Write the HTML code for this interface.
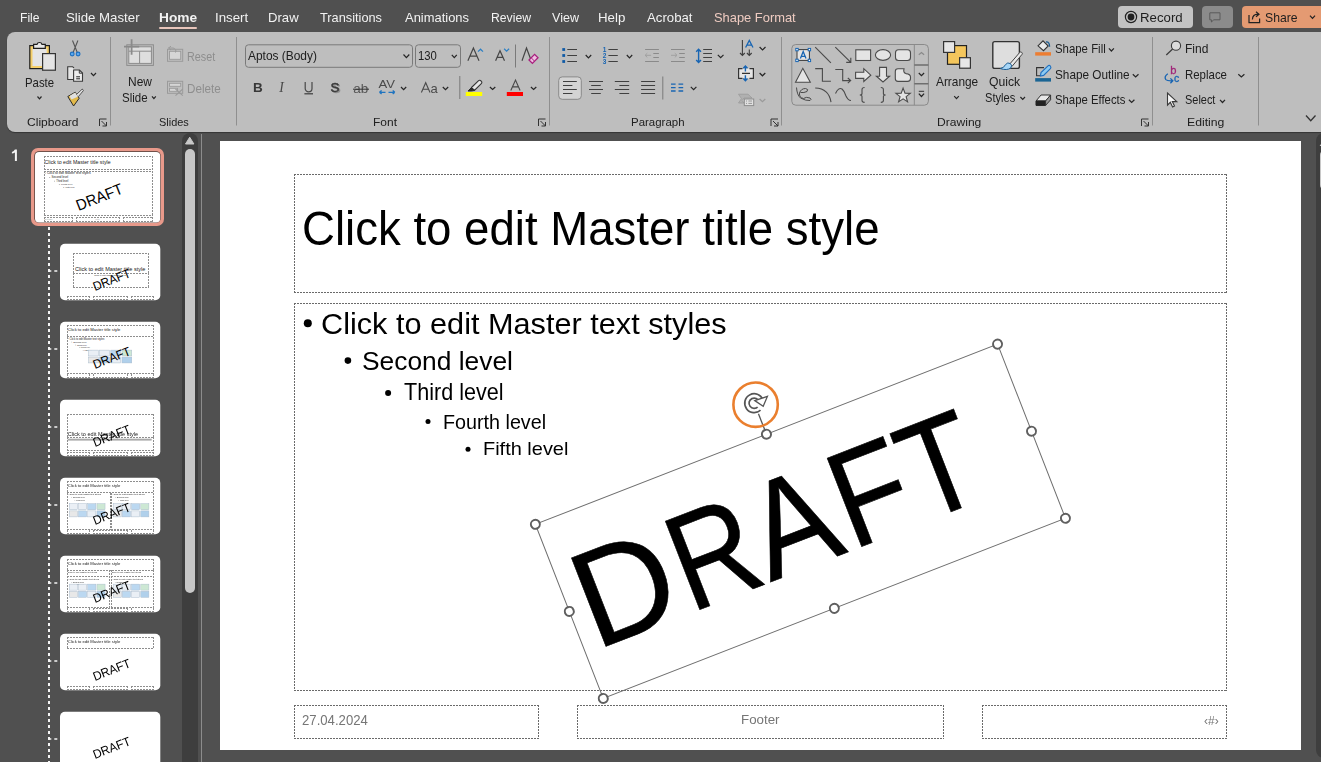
<!DOCTYPE html>
<html><head><meta charset="utf-8">
<style>
html,body{margin:0;padding:0;}
body{width:1321px;height:762px;overflow:hidden;background:#505050;position:relative;font-family:"Liberation Sans",sans-serif;}
.t{position:absolute;white-space:nowrap;line-height:1em;transform-origin:0 0;}
.abs{position:absolute;}
svg{position:absolute;left:0;top:0;overflow:visible;}
</style></head><body>
<!-- tab underline -->
<div class="abs" style="left:159px;top:27px;width:38px;height:2px;background:#e8c5bb;border-radius:1px"></div>
<!-- top-right buttons -->
<div class="abs" style="left:1117.5px;top:5.5px;width:75px;height:22.5px;background:#c3c3c3;border-radius:4px"></div>
<div class="abs" style="left:1201.5px;top:5.5px;width:31px;height:22.5px;background:#8b8b8b;border-radius:4px"></div>
<div class="abs" style="left:1241.5px;top:5.5px;width:85px;height:22.5px;background:#e49a72;border-radius:4px"></div>
<!-- ribbon -->
<div class="abs" style="left:7px;top:32px;width:1330px;height:99.5px;background:#bebebe;border-radius:8px;box-shadow:0 1px 1px rgba(0,0,0,0.35)"></div>
<!-- left panel scrollbar -->
<div class="abs" style="left:181.5px;top:132.5px;width:16px;height:640px;background:#3e3e3e;border-radius:8px 8px 0 0"></div>
<div class="abs" style="left:185px;top:149px;width:9.5px;height:444px;background:#c8c8c8;border-radius:5px"></div>
<div class="abs" style="left:201px;top:134px;width:1px;height:640px;background:#8c8c8c"></div>
<svg width="1321" height="762"><path d="M185.5 144 L189.7 137.2 L193.9 144 Z" fill="#c8c8c8" stroke="#c8c8c8" stroke-width="1" stroke-linejoin="round"/></svg>
<!-- right scrollbar -->
<div class="abs" style="left:1316px;top:132.5px;width:16px;height:625px;background:#3e3e3e;border-radius:8px"></div>
<div class="abs" style="left:1319.6px;top:150.7px;width:8px;height:38.7px;background:#c8c8c8;border-radius:4px"></div>
<svg width="1321" height="762"><path d="M1319.6 146 L1323.5 140.5 L1327 146 Z" fill="#c8c8c8"/></svg>
<!-- slide -->
<div class="abs" style="left:220px;top:141px;width:1080.5px;height:609px;background:#fff"></div>
<svg width="1321" height="762">
<line x1="49" y1="227" x2="49" y2="762" stroke="#f4f4f4" stroke-width="2" stroke-dasharray="3 3"/>
<line x1="48.3" y1="271" x2="57.3" y2="271" stroke="#f4f4f4" stroke-width="1.6" stroke-dasharray="3 3"/>
<rect x="60" y="243.7" width="100.3" height="56.5" rx="5" fill="#fff"/><clipPath id="c243"><rect x="60" y="243.7" width="100.3" height="56.5" rx="5"/></clipPath><g clip-path="url(#c243)"><g transform="translate(60 243.7) scale(0.09287)" opacity="0.9"><text x="540" y="295" text-anchor="middle" font-family="Liberation Sans" font-size="60" fill="#000">Click to edit Master title style</text><text x="540" y="345" text-anchor="middle" font-family="Liberation Sans" font-size="24" fill="#000">Click to edit Master subtitle style</text></g><path d="M73 253.5 H149 M73 273.5 H149 M73.5 253 V274 M148.5 253 V274" fill="none" stroke="#8e8e8e" stroke-width="1" stroke-dasharray="2 1"/><path d="M73 287.5 H149 M73.5 273 V288 M148.5 273 V288" fill="none" stroke="#8e8e8e" stroke-width="1" stroke-dasharray="2 1"/><path d="M67 296.5 H90 M67 299.5 H90 M67.5 296 V300 M89.5 296 V300" fill="none" stroke="#8e8e8e" stroke-width="1" stroke-dasharray="2 1"/><path d="M93 296.5 H128 M93 299.5 H128 M93.5 296 V300 M127.5 296 V300" fill="none" stroke="#8e8e8e" stroke-width="1" stroke-dasharray="2 1"/><path d="M131 296.5 H154 M131 299.5 H154 M131.5 296 V300 M153.5 296 V300" fill="none" stroke="#8e8e8e" stroke-width="1" stroke-dasharray="2 1"/><g transform="translate(60 243.7) scale(0.09287)"><g transform="translate(315.5 382) rotate(-21.3)"><text x="11.07" y="139.5" transform="scale(0.947 1)" font-family="Liberation Sans" font-size="134" fill="#000">DRAFT</text></g></g></g>
<line x1="48.3" y1="349" x2="57.3" y2="349" stroke="#f4f4f4" stroke-width="1.6" stroke-dasharray="3 3"/>
<rect x="60" y="321.7" width="100.3" height="56.5" rx="5" fill="#fff"/><clipPath id="c321"><rect x="60" y="321.7" width="100.3" height="56.5" rx="5"/></clipPath><g clip-path="url(#c321)"><g transform="translate(60 321.7) scale(0.09287)" opacity="0.9"><text x="83" y="104" font-family="Liberation Sans" font-size="45" fill="#000">Click to edit Master title style</text><circle cx="87.8" cy="182.0" r="3.0" fill="#000"/><text x="103.0" y="192.5" font-family="Liberation Sans" font-size="28.5" fill="#000">Click to edit Master text styles</text><circle cx="127.8" cy="219.0" r="3.0" fill="#000"/><text x="143.0" y="228.3" font-family="Liberation Sans" font-size="25.2" fill="#000">Second level</text><circle cx="168.8" cy="251.2" r="3.0" fill="#000"/><text x="184.0" y="259.5" font-family="Liberation Sans" font-size="22.3" fill="#000">Third level</text><circle cx="208.8" cy="280.9" r="3.0" fill="#000"/><text x="224.0" y="287.9" font-family="Liberation Sans" font-size="19.0" fill="#000">Fourth level</text><circle cx="248.8" cy="307.8" r="3.0" fill="#000"/><text x="264.0" y="314.5" font-family="Liberation Sans" font-size="18.2" fill="#000">Fifth level</text><rect x="307.2" y="306.0" width="105.6" height="63.0" fill="#e8eef4" stroke="#9fb3c6" stroke-width="5"/><rect x="427.2" y="306.0" width="105.6" height="63.0" fill="#e8eef4" stroke="#9fb3c6" stroke-width="5"/><rect x="547.2" y="306.0" width="105.6" height="63.0" fill="#b4d4f0" stroke="#9fb3c6" stroke-width="5"/><rect x="667.2" y="306.0" width="105.6" height="63.0" fill="#c8e6d0" stroke="#9fb3c6" stroke-width="5"/><rect x="307.2" y="381.0" width="105.6" height="63.0" fill="#e6e6e6" stroke="#9fb3c6" stroke-width="5"/><rect x="427.2" y="381.0" width="105.6" height="63.0" fill="#b4d4f0" stroke="#9fb3c6" stroke-width="5"/><rect x="547.2" y="381.0" width="105.6" height="63.0" fill="#e8eef4" stroke="#9fb3c6" stroke-width="5"/><rect x="667.2" y="381.0" width="105.6" height="63.0" fill="#a8cbe9" stroke="#9fb3c6" stroke-width="5"/></g><path d="M67 325.5 H154 M67 336.5 H154 M67.5 325 V337 M153.5 325 V337" fill="none" stroke="#8e8e8e" stroke-width="1" stroke-dasharray="2 1"/><path d="M67 373.5 H154 M67.5 337 V374 M153.5 337 V374" fill="none" stroke="#8e8e8e" stroke-width="1" stroke-dasharray="2 1"/><path d="M67 377.5 H90 M67.5 374 V378 M89.5 374 V378" fill="none" stroke="#8e8e8e" stroke-width="1" stroke-dasharray="2 1"/><path d="M93 377.5 H128 M93.5 374 V378 M127.5 374 V378" fill="none" stroke="#8e8e8e" stroke-width="1" stroke-dasharray="2 1"/><path d="M131 377.5 H154 M131.5 374 V378 M153.5 374 V378" fill="none" stroke="#8e8e8e" stroke-width="1" stroke-dasharray="2 1"/><g transform="translate(60 321.7) scale(0.09287)"><g transform="translate(315.5 382) rotate(-21.3)"><text x="11.07" y="139.5" transform="scale(0.947 1)" font-family="Liberation Sans" font-size="134" fill="#000">DRAFT</text></g></g></g>
<line x1="48.3" y1="427" x2="57.3" y2="427" stroke="#f4f4f4" stroke-width="1.6" stroke-dasharray="3 3"/>
<rect x="60" y="399.7" width="100.3" height="56.5" rx="5" fill="#fff"/><clipPath id="c399"><rect x="60" y="399.7" width="100.3" height="56.5" rx="5"/></clipPath><g clip-path="url(#c399)"><g transform="translate(60 399.7) scale(0.09287)" opacity="0.9"><text x="83" y="395" font-family="Liberation Sans" font-size="60" fill="#000">Click to edit Master title style</text><rect x="84" y="420" width="900" height="16" fill="#9a9a9a" opacity="0.5"/><rect x="84" y="420" width="900" height="16" fill="#9a9a9a" opacity="0.5"/><rect x="84" y="420" width="900" height="16" fill="#9a9a9a" opacity="0.5"/><rect x="84" y="420" width="900" height="16" fill="#9a9a9a" opacity="0.5"/><rect x="84" y="420" width="900" height="16" fill="#9a9a9a" opacity="0.5"/><rect x="84" y="420" width="900" height="16" fill="#9a9a9a" opacity="0.5"/></g><path d="M67 414.5 H154 M67 437.5 H154 M67.5 414 V438 M153.5 414 V438" fill="none" stroke="#8e8e8e" stroke-width="1" stroke-dasharray="2 1"/><path d="M67 450.5 H154 M67.5 437 V451 M153.5 437 V451" fill="none" stroke="#8e8e8e" stroke-width="1" stroke-dasharray="2 1"/><path d="M67 452.5 H90 M67 455.5 H90 M67.5 452 V456 M89.5 452 V456" fill="none" stroke="#8e8e8e" stroke-width="1" stroke-dasharray="2 1"/><path d="M93 452.5 H128 M93 455.5 H128 M93.5 452 V456 M127.5 452 V456" fill="none" stroke="#8e8e8e" stroke-width="1" stroke-dasharray="2 1"/><path d="M131 452.5 H154 M131 455.5 H154 M131.5 452 V456 M153.5 452 V456" fill="none" stroke="#8e8e8e" stroke-width="1" stroke-dasharray="2 1"/><g transform="translate(60 399.7) scale(0.09287)"><g transform="translate(315.5 382) rotate(-21.3)"><text x="11.07" y="139.5" transform="scale(0.947 1)" font-family="Liberation Sans" font-size="134" fill="#000">DRAFT</text></g></g></g>
<line x1="48.3" y1="505" x2="57.3" y2="505" stroke="#f4f4f4" stroke-width="1.6" stroke-dasharray="3 3"/>
<rect x="60" y="477.7" width="100.3" height="56.5" rx="5" fill="#fff"/><clipPath id="c477"><rect x="60" y="477.7" width="100.3" height="56.5" rx="5"/></clipPath><g clip-path="url(#c477)"><g transform="translate(60 477.7) scale(0.09287)" opacity="0.9"><text x="83" y="104" font-family="Liberation Sans" font-size="45" fill="#000">Click to edit Master title style</text><circle cx="87.8" cy="179.9" r="2.7" fill="#000"/><text x="103.0" y="189.4" font-family="Liberation Sans" font-size="25.7" fill="#000">Click to edit Master text styles</text><circle cx="123.8" cy="213.2" r="2.7" fill="#000"/><text x="139.0" y="221.6" font-family="Liberation Sans" font-size="22.7" fill="#000">Second level</text><circle cx="160.7" cy="242.3" r="2.7" fill="#000"/><text x="175.9" y="249.7" font-family="Liberation Sans" font-size="20.1" fill="#000">Third level</text><circle cx="559.8" cy="179.9" r="2.7" fill="#000"/><text x="575.0" y="189.4" font-family="Liberation Sans" font-size="25.7" fill="#000">Click to edit Master text styles</text><circle cx="595.8" cy="213.2" r="2.7" fill="#000"/><text x="611.0" y="221.6" font-family="Liberation Sans" font-size="22.7" fill="#000">Second level</text><circle cx="632.7" cy="242.3" r="2.7" fill="#000"/><text x="647.9" y="249.7" font-family="Liberation Sans" font-size="20.1" fill="#000">Third level</text><rect x="100.9" y="280.2" width="87.1" height="64.7" fill="#e8eef4" stroke="#9fb3c6" stroke-width="5"/><rect x="199.9" y="280.2" width="87.1" height="64.7" fill="#e8eef4" stroke="#9fb3c6" stroke-width="5"/><rect x="298.9" y="280.2" width="87.1" height="64.7" fill="#b4d4f0" stroke="#9fb3c6" stroke-width="5"/><rect x="397.9" y="280.2" width="87.1" height="64.7" fill="#c8e6d0" stroke="#9fb3c6" stroke-width="5"/><rect x="100.9" y="357.2" width="87.1" height="64.7" fill="#e6e6e6" stroke="#9fb3c6" stroke-width="5"/><rect x="199.9" y="357.2" width="87.1" height="64.7" fill="#b4d4f0" stroke="#9fb3c6" stroke-width="5"/><rect x="298.9" y="357.2" width="87.1" height="64.7" fill="#e8eef4" stroke="#9fb3c6" stroke-width="5"/><rect x="397.9" y="357.2" width="87.1" height="64.7" fill="#a8cbe9" stroke="#9fb3c6" stroke-width="5"/><rect x="572.9" y="280.2" width="87.1" height="64.7" fill="#e8eef4" stroke="#9fb3c6" stroke-width="5"/><rect x="671.9" y="280.2" width="87.1" height="64.7" fill="#e8eef4" stroke="#9fb3c6" stroke-width="5"/><rect x="770.9" y="280.2" width="87.1" height="64.7" fill="#b4d4f0" stroke="#9fb3c6" stroke-width="5"/><rect x="869.9" y="280.2" width="87.1" height="64.7" fill="#c8e6d0" stroke="#9fb3c6" stroke-width="5"/><rect x="572.9" y="357.2" width="87.1" height="64.7" fill="#e6e6e6" stroke="#9fb3c6" stroke-width="5"/><rect x="671.9" y="357.2" width="87.1" height="64.7" fill="#b4d4f0" stroke="#9fb3c6" stroke-width="5"/><rect x="770.9" y="357.2" width="87.1" height="64.7" fill="#e8eef4" stroke="#9fb3c6" stroke-width="5"/><rect x="869.9" y="357.2" width="87.1" height="64.7" fill="#a8cbe9" stroke="#9fb3c6" stroke-width="5"/></g><path d="M67 481.5 H154 M67 492.5 H154 M67.5 481 V493 M153.5 481 V493" fill="none" stroke="#8e8e8e" stroke-width="1" stroke-dasharray="2 1"/><path d="M67 529.5 H111 M67.5 493 V530 M110.5 493 V530" fill="none" stroke="#8e8e8e" stroke-width="1" stroke-dasharray="2 1"/><path d="M111 529.5 H154 M111.5 493 V530 M153.5 493 V530" fill="none" stroke="#8e8e8e" stroke-width="1" stroke-dasharray="2 1"/><path d="M67 533.5 H90 M67.5 530 V534 M89.5 530 V534" fill="none" stroke="#8e8e8e" stroke-width="1" stroke-dasharray="2 1"/><path d="M93 530.5 H128 M93 533.5 H128 M93.5 530 V534 M127.5 530 V534" fill="none" stroke="#8e8e8e" stroke-width="1" stroke-dasharray="2 1"/><path d="M131 533.5 H154 M131.5 530 V534 M153.5 530 V534" fill="none" stroke="#8e8e8e" stroke-width="1" stroke-dasharray="2 1"/><g transform="translate(60 477.7) scale(0.09287)"><g transform="translate(315.5 382) rotate(-21.3)"><text x="11.07" y="139.5" transform="scale(0.947 1)" font-family="Liberation Sans" font-size="134" fill="#000">DRAFT</text></g></g></g>
<line x1="48.3" y1="583" x2="57.3" y2="583" stroke="#f4f4f4" stroke-width="1.6" stroke-dasharray="3 3"/>
<rect x="60" y="555.7" width="100.3" height="56.5" rx="5" fill="#fff"/><clipPath id="c555"><rect x="60" y="555.7" width="100.3" height="56.5" rx="5"/></clipPath><g clip-path="url(#c555)"><g transform="translate(60 555.7) scale(0.09287)" opacity="0.9"><text x="83" y="104" font-family="Liberation Sans" font-size="45" fill="#000">Click to edit Master title style</text><text x="84" y="190" font-family="Liberation Sans" font-size="24" fill="#000">Click to edit Master text styles</text><text x="557" y="190" font-family="Liberation Sans" font-size="24" fill="#000">Click to edit Master text styles</text><circle cx="87.8" cy="253.4" r="2.5" fill="#000"/><text x="103.0" y="262.4" font-family="Liberation Sans" font-size="24.2" fill="#000">Click to edit Master text styles</text><circle cx="121.8" cy="284.9" r="2.5" fill="#000"/><text x="137.0" y="292.8" font-family="Liberation Sans" font-size="21.4" fill="#000">Second level</text><circle cx="156.6" cy="312.3" r="2.5" fill="#000"/><text x="171.8" y="319.3" font-family="Liberation Sans" font-size="19.0" fill="#000">Third level</text><circle cx="559.8" cy="253.4" r="2.5" fill="#000"/><text x="575.0" y="262.4" font-family="Liberation Sans" font-size="24.2" fill="#000">Click to edit Master text styles</text><circle cx="593.8" cy="284.9" r="2.5" fill="#000"/><text x="609.0" y="292.8" font-family="Liberation Sans" font-size="21.4" fill="#000">Second level</text><circle cx="628.6" cy="312.3" r="2.5" fill="#000"/><text x="643.9" y="319.3" font-family="Liberation Sans" font-size="19.0" fill="#000">Third level</text><rect x="100.9" y="306.2" width="87.1" height="64.7" fill="#e8eef4" stroke="#9fb3c6" stroke-width="5"/><rect x="199.9" y="306.2" width="87.1" height="64.7" fill="#e8eef4" stroke="#9fb3c6" stroke-width="5"/><rect x="298.9" y="306.2" width="87.1" height="64.7" fill="#b4d4f0" stroke="#9fb3c6" stroke-width="5"/><rect x="397.9" y="306.2" width="87.1" height="64.7" fill="#c8e6d0" stroke="#9fb3c6" stroke-width="5"/><rect x="100.9" y="383.2" width="87.1" height="64.7" fill="#e6e6e6" stroke="#9fb3c6" stroke-width="5"/><rect x="199.9" y="383.2" width="87.1" height="64.7" fill="#b4d4f0" stroke="#9fb3c6" stroke-width="5"/><rect x="298.9" y="383.2" width="87.1" height="64.7" fill="#e8eef4" stroke="#9fb3c6" stroke-width="5"/><rect x="397.9" y="383.2" width="87.1" height="64.7" fill="#a8cbe9" stroke="#9fb3c6" stroke-width="5"/><rect x="572.9" y="306.2" width="87.1" height="64.7" fill="#e8eef4" stroke="#9fb3c6" stroke-width="5"/><rect x="671.9" y="306.2" width="87.1" height="64.7" fill="#e8eef4" stroke="#9fb3c6" stroke-width="5"/><rect x="770.9" y="306.2" width="87.1" height="64.7" fill="#b4d4f0" stroke="#9fb3c6" stroke-width="5"/><rect x="869.9" y="306.2" width="87.1" height="64.7" fill="#c8e6d0" stroke="#9fb3c6" stroke-width="5"/><rect x="572.9" y="383.2" width="87.1" height="64.7" fill="#e6e6e6" stroke="#9fb3c6" stroke-width="5"/><rect x="671.9" y="383.2" width="87.1" height="64.7" fill="#b4d4f0" stroke="#9fb3c6" stroke-width="5"/><rect x="770.9" y="383.2" width="87.1" height="64.7" fill="#e8eef4" stroke="#9fb3c6" stroke-width="5"/><rect x="869.9" y="383.2" width="87.1" height="64.7" fill="#a8cbe9" stroke="#9fb3c6" stroke-width="5"/></g><path d="M67 559.5 H154 M67 570.5 H154 M67.5 559 V571 M153.5 559 V571" fill="none" stroke="#8e8e8e" stroke-width="1" stroke-dasharray="2 1"/><path d="M67 576.5 H110 M67.5 570 V577 M109.5 570 V577" fill="none" stroke="#8e8e8e" stroke-width="1" stroke-dasharray="2 1"/><path d="M67 607.5 H110 M67.5 576 V608 M109.5 576 V608" fill="none" stroke="#8e8e8e" stroke-width="1" stroke-dasharray="2 1"/><path d="M111 576.5 H154 M111.5 570 V577 M153.5 570 V577" fill="none" stroke="#8e8e8e" stroke-width="1" stroke-dasharray="2 1"/><path d="M111 607.5 H154 M111.5 576 V608 M153.5 576 V608" fill="none" stroke="#8e8e8e" stroke-width="1" stroke-dasharray="2 1"/><path d="M67 611.5 H90 M67.5 608 V612 M89.5 608 V612" fill="none" stroke="#8e8e8e" stroke-width="1" stroke-dasharray="2 1"/><path d="M93 608.5 H128 M93 611.5 H128 M93.5 608 V612 M127.5 608 V612" fill="none" stroke="#8e8e8e" stroke-width="1" stroke-dasharray="2 1"/><path d="M131 611.5 H154 M131.5 608 V612 M153.5 608 V612" fill="none" stroke="#8e8e8e" stroke-width="1" stroke-dasharray="2 1"/><g transform="translate(60 555.7) scale(0.09287)"><g transform="translate(315.5 382) rotate(-21.3)"><text x="11.07" y="139.5" transform="scale(0.947 1)" font-family="Liberation Sans" font-size="134" fill="#000">DRAFT</text></g></g></g>
<line x1="48.3" y1="661" x2="57.3" y2="661" stroke="#f4f4f4" stroke-width="1.6" stroke-dasharray="3 3"/>
<rect x="60" y="633.7" width="100.3" height="56.5" rx="5" fill="#fff"/><clipPath id="c633"><rect x="60" y="633.7" width="100.3" height="56.5" rx="5"/></clipPath><g clip-path="url(#c633)"><g transform="translate(60 633.7) scale(0.09287)" opacity="0.9"><text x="83" y="104" font-family="Liberation Sans" font-size="45" fill="#000">Click to edit Master title style</text></g><path d="M67 637.5 H154 M67 648.5 H154 M67.5 637 V649 M153.5 637 V649" fill="none" stroke="#8e8e8e" stroke-width="1" stroke-dasharray="2 1"/><path d="M67 686.5 H90 M67 689.5 H90 M67.5 686 V690 M89.5 686 V690" fill="none" stroke="#8e8e8e" stroke-width="1" stroke-dasharray="2 1"/><path d="M93 686.5 H128 M93 689.5 H128 M93.5 686 V690 M127.5 686 V690" fill="none" stroke="#8e8e8e" stroke-width="1" stroke-dasharray="2 1"/><path d="M131 686.5 H154 M131 689.5 H154 M131.5 686 V690 M153.5 686 V690" fill="none" stroke="#8e8e8e" stroke-width="1" stroke-dasharray="2 1"/><g transform="translate(60 633.7) scale(0.09287)"><g transform="translate(315.5 382) rotate(-21.3)"><text x="11.07" y="139.5" transform="scale(0.947 1)" font-family="Liberation Sans" font-size="134" fill="#000">DRAFT</text></g></g></g>
<line x1="48.3" y1="739" x2="57.3" y2="739" stroke="#f4f4f4" stroke-width="1.6" stroke-dasharray="3 3"/>
<rect x="60" y="711.7" width="100.3" height="56.5" rx="5" fill="#fff"/><clipPath id="c711"><rect x="60" y="711.7" width="100.3" height="56.5" rx="5"/></clipPath><g clip-path="url(#c711)"><g transform="translate(60 711.7) scale(0.09287)" opacity="0.9"></g><path d="M67 764.5 H90 M67 767.5 H90 M67.5 764 V768 M89.5 764 V768" fill="none" stroke="#8e8e8e" stroke-width="1" stroke-dasharray="2 1"/><path d="M93 764.5 H128 M93 767.5 H128 M93.5 764 V768 M127.5 764 V768" fill="none" stroke="#8e8e8e" stroke-width="1" stroke-dasharray="2 1"/><path d="M131 764.5 H154 M131 767.5 H154 M131.5 764 V768 M153.5 764 V768" fill="none" stroke="#8e8e8e" stroke-width="1" stroke-dasharray="2 1"/><g transform="translate(60 711.7) scale(0.09287)"><g transform="translate(315.5 382) rotate(-21.3)"><text x="11.07" y="139.5" transform="scale(0.947 1)" font-family="Liberation Sans" font-size="134" fill="#000">DRAFT</text></g></g></g>
<rect x="31" y="148" width="133" height="78" rx="7" fill="#e8998a"/>
<rect x="34.3" y="151.3" width="126.4" height="71.4" rx="4.5" fill="#4a3a36"/>
<rect x="35" y="152" width="125.2" height="70.4" rx="4" fill="#fff"/><clipPath id="c152"><rect x="35" y="152" width="125.2" height="70.4" rx="4"/></clipPath><g clip-path="url(#c152)"><g transform="translate(35 152) scale(0.11593)" opacity="0.9"><text x="83" y="104" font-family="Liberation Sans" font-size="45" fill="#000">Click to edit Master title style</text><circle cx="87.8" cy="182.0" r="3.0" fill="#000"/><text x="103.0" y="192.5" font-family="Liberation Sans" font-size="28.5" fill="#000">Click to edit Master text styles</text><circle cx="127.8" cy="219.0" r="3.0" fill="#000"/><text x="143.0" y="228.3" font-family="Liberation Sans" font-size="25.2" fill="#000">Second level</text><circle cx="168.8" cy="251.2" r="3.0" fill="#000"/><text x="184.0" y="259.5" font-family="Liberation Sans" font-size="22.3" fill="#000">Third level</text><circle cx="208.8" cy="280.9" r="3.0" fill="#000"/><text x="224.0" y="287.9" font-family="Liberation Sans" font-size="19.0" fill="#000">Fourth level</text><circle cx="248.8" cy="307.8" r="3.0" fill="#000"/><text x="264.0" y="314.5" font-family="Liberation Sans" font-size="18.2" fill="#000">Fifth level</text><text x="82" y="584" font-family="Liberation Sans" font-size="13.4" fill="#777">27.04.2024</text><text x="521" y="583" font-family="Liberation Sans" font-size="12" fill="#777">Footer</text></g><path d="M44 156.5 H153 M44 169.5 H153 M44.5 156 V170 M152.5 156 V170" fill="none" stroke="#8e8e8e" stroke-width="1" stroke-dasharray="2 1"/><path d="M44 171.5 H153 M44 215.5 H153 M44.5 171 V216 M152.5 171 V216" fill="none" stroke="#8e8e8e" stroke-width="1" stroke-dasharray="2 1"/><path d="M44 217.5 H73 M44 221.5 H73 M44.5 217 V222 M72.5 217 V222" fill="none" stroke="#8e8e8e" stroke-width="1" stroke-dasharray="2 1"/><path d="M76 217.5 H120 M76 221.5 H120 M76.5 217 V222 M119.5 217 V222" fill="none" stroke="#8e8e8e" stroke-width="1" stroke-dasharray="2 1"/><path d="M123 217.5 H153 M123 221.5 H153 M123.5 217 V222 M152.5 217 V222" fill="none" stroke="#8e8e8e" stroke-width="1" stroke-dasharray="2 1"/><g transform="translate(35 152) scale(0.11593)"><g transform="translate(315.5 382) rotate(-21.3)"><text x="11.07" y="139.5" transform="scale(0.947 1)" font-family="Liberation Sans" font-size="134" fill="#000">DRAFT</text></g></g></g>
<path d="M14.9 149.6 H16.9 V160.9 H14.9 V152.4 Q13.6 153.4 11.9 153.6 V151.9 Q14 151.3 14.9 149.6 Z" fill="#f4f4f4"/>
</svg>
<svg width="1321" height="762" style="pointer-events:none">
<path d="M294 174.5 H1227 M294 292.5 H1227 M294.5 174 V293 M1226.5 174 V293" stroke="#6a6a6a" stroke-width="1" fill="none" stroke-dasharray="2 1"/>
<path d="M294 303.5 H1227 M294 690.5 H1227 M294.5 303 V691 M1226.5 303 V691" stroke="#6a6a6a" stroke-width="1" fill="none" stroke-dasharray="2 1"/>
<path d="M294 705.5 H539 M294 738.5 H539 M294.5 705 V739 M538.5 705 V739" stroke="#6a6a6a" stroke-width="1" fill="none" stroke-dasharray="2 1"/>
<path d="M577 705.5 H944 M577 738.5 H944 M577.5 705 V739 M943.5 705 V739" stroke="#6a6a6a" stroke-width="1" fill="none" stroke-dasharray="2 1"/>
<path d="M982 705.5 H1227 M982 738.5 H1227 M982.5 705 V739 M1226.5 705 V739" stroke="#6a6a6a" stroke-width="1" fill="none" stroke-dasharray="2 1"/>
<circle cx="307.8" cy="323.3" r="4.0" fill="#000"/>
<circle cx="347.9" cy="360.6" r="3.3" fill="#000"/>
<circle cx="388.1" cy="393" r="3.0" fill="#000"/>
<circle cx="428" cy="421.6" r="2.5" fill="#000"/>
<circle cx="468" cy="449.2" r="2.5" fill="#000"/>
<g transform="translate(535.5 523.5) rotate(-21.3)">
<text transform="translate(9.78 140) scale(0.991 1)" font-family="Liberation Sans" font-size="138" fill="#000" stroke="#000" stroke-width="0.6">D</text>
<text transform="translate(112.16 140) scale(0.852 1)" font-family="Liberation Sans" font-size="138" fill="#000" stroke="#000" stroke-width="0.6">R</text>
<text transform="translate(197.35 140) scale(0.915 1)" font-family="Liberation Sans" font-size="138" fill="#000" stroke="#000" stroke-width="0.6">A</text>
<text transform="translate(285.45 140) scale(0.888 1)" font-family="Liberation Sans" font-size="138" fill="#000" stroke="#000" stroke-width="0.6">F</text>
<text transform="translate(359.93 140) scale(0.878 1)" font-family="Liberation Sans" font-size="138" fill="#000" stroke="#000" stroke-width="0.6">T</text>
</g>
<g transform="translate(535.35 524.34) rotate(-21.3)">
<rect x="0" y="0" width="496.1" height="186.9" fill="none" stroke="#6e6e6e" stroke-width="1"/>
<line x1="248.05" y1="-5" x2="248.05" y2="-22" stroke="#555" stroke-width="1.3"/>
<circle cx="0" cy="0" r="4.5" fill="#fff" stroke="#5f5f5f" stroke-width="2"/>
<circle cx="248.05" cy="0" r="4.5" fill="#fff" stroke="#5f5f5f" stroke-width="2"/>
<circle cx="496.1" cy="0" r="4.5" fill="#fff" stroke="#5f5f5f" stroke-width="2"/>
<circle cx="0" cy="93.45" r="4.5" fill="#fff" stroke="#5f5f5f" stroke-width="2"/>
<circle cx="496.1" cy="93.45" r="4.5" fill="#fff" stroke="#5f5f5f" stroke-width="2"/>
<circle cx="0" cy="186.9" r="4.5" fill="#fff" stroke="#5f5f5f" stroke-width="2"/>
<circle cx="248.05" cy="186.9" r="4.5" fill="#fff" stroke="#5f5f5f" stroke-width="2"/>
<circle cx="496.1" cy="186.9" r="4.5" fill="#fff" stroke="#5f5f5f" stroke-width="2"/>
</g>
<circle cx="755.6" cy="404.7" r="22.2" fill="none" stroke="#ea7f2e" stroke-width="2.6"/>
<path d="M760.97 400.47 A7.3 7.3 0 1 0 759.08 408.62" fill="none" stroke="#555" stroke-width="6"/>
<path d="M761.22 401.19 A7.3 7.3 0 1 0 759.62 408.08" fill="none" stroke="#fff" stroke-width="2.6"/>
<path d="M754.8 400.6 L767.4 396.4 L763.2 406.2 Z" fill="#fff" stroke="#555" stroke-width="1.3" stroke-linejoin="miter"/>
<text x="1204" y="725" font-family="Liberation Sans" font-size="12" fill="#777">‹#›</text>
</svg><svg width="1321" height="762">
<line x1="110.5" y1="37" x2="110.5" y2="125.5" stroke="#8f8f8f" stroke-width="1"/>
<line x1="236.5" y1="37" x2="236.5" y2="125.5" stroke="#8f8f8f" stroke-width="1"/>
<line x1="549.5" y1="37" x2="549.5" y2="125.5" stroke="#8f8f8f" stroke-width="1"/>
<line x1="781.5" y1="37" x2="781.5" y2="125.5" stroke="#8f8f8f" stroke-width="1"/>
<line x1="1152.5" y1="37" x2="1152.5" y2="125.5" stroke="#8f8f8f" stroke-width="1"/>
<line x1="1258.5" y1="37" x2="1258.5" y2="125.5" stroke="#8f8f8f" stroke-width="1"/>
<path d="M99.5 126.0 V119.0 H106.5" fill="none" stroke="#333" stroke-width="1"/><path d="M101.5 121.0 L106.5 126.0 M106.5 122.0 V126.0 H102.5" fill="none" stroke="#333" stroke-width="1"/>
<path d="M538.5 126.0 V119.0 H545.5" fill="none" stroke="#333" stroke-width="1"/><path d="M540.5 121.0 L545.5 126.0 M545.5 122.0 V126.0 H541.5" fill="none" stroke="#333" stroke-width="1"/>
<path d="M771.0 126.0 V119.0 H778.0" fill="none" stroke="#333" stroke-width="1"/><path d="M773.0 121.0 L778.0 126.0 M778.0 122.0 V126.0 H774.0" fill="none" stroke="#333" stroke-width="1"/>
<path d="M1141.5 126.0 V119.0 H1148.5" fill="none" stroke="#333" stroke-width="1"/><path d="M1143.5 121.0 L1148.5 126.0 M1148.5 122.0 V126.0 H1144.5" fill="none" stroke="#333" stroke-width="1"/>
<rect x="29.8" y="45.6" width="19.6" height="23" fill="#f5cf68" stroke="#1e1e1e" stroke-width="1.2"/>
<rect x="32.5" y="48.5" width="14.2" height="17.5" fill="#e4e4e4"/>
<path d="M33.6 48.3 V44.4 H37 A2.6 2.6 0 0 1 42 44.4 H45.3 V48.3 Z" fill="#e8e8e8" stroke="#1e1e1e" stroke-width="1.2"/>
<rect x="42.6" y="53.6" width="12.8" height="16.6" fill="#e4e4e4" stroke="#333" stroke-width="1.2"/>
<path d="M37.5 96.5 L39.5 98.8 L41.5 96.5" fill="none" stroke="#262626" stroke-width="1.2"/>
<path d="M72.5 40.5 L77.2 52.2 M77.9 40.5 L73.2 52.2" stroke="#555" stroke-width="1.1"/>
<circle cx="72.2" cy="54" r="1.9" fill="#5aa8ee" stroke="#1f6fbf" stroke-width="1.1"/><circle cx="78.1" cy="54" r="1.9" fill="#5aa8ee" stroke="#1f6fbf" stroke-width="1.1"/>
<path d="M73.5 79.5 H67.7 V66.7 H72.6 L74 68" fill="#e6e6e6" stroke="#3a3a3a" stroke-width="1.1"/>
<path d="M73.6 70 H79.5 L82.5 73 V81.3 H73.6 Z" fill="#ececec" stroke="#3a3a3a" stroke-width="1.1"/>
<path d="M79.3 70 V73.2 H82.5" fill="none" stroke="#3a3a3a" stroke-width="1"/><path d="M76.2 76.8 H80 M76.2 78.8 H80" stroke="#222" stroke-width="1"/>
<path d="M91 73 L93.5 75.6 L96 73" fill="none" stroke="#262626" stroke-width="1.2"/>
<path d="M67.8 96.5 L75.2 92.2 L79.2 98.2 L73.6 106 Z" fill="#e2b94a" stroke="#2a2a2a" stroke-width="1"/>
<path d="M69.5 96 L75.2 92.5 L77.8 96.8 L71.5 99.5 Z" fill="#e0e0e0"/>
<path d="M76.5 94.5 L82.3 89 L83.4 90.6 L78.2 96.8" fill="#e4e4e4" stroke="#555" stroke-width="1"/>
<rect x="126.8" y="44.8" width="26.6" height="20.6" fill="none" stroke="#8c8c8c" stroke-width="1"/>
<rect x="128.8" y="46.8" width="22.6" height="16.6" fill="#dedede" stroke="#8c8c8c" stroke-width="1"/>
<path d="M128.8 51.2 H151.4 M139.6 51.2 V63.4" stroke="#8c8c8c" stroke-width="1"/>
<path d="M131.6 39.2 V54.8 M124 46.6 H139.2" stroke="#8a8a8a" stroke-width="1.8"/>
<path d="M152 96.4 L153.9 98.6 L155.8 96.4" fill="none" stroke="#262626" stroke-width="1.2"/>
<rect x="167.5" y="49.3" width="15.2" height="12" fill="none" stroke="#9a9a9a" stroke-width="1"/><rect x="169.5" y="51.3" width="11.2" height="8" fill="#d6d6d6" stroke="#9a9a9a" stroke-width="0.9"/>
<path d="M168.5 48 L171 46.2 M168.5 48 L171 50 M168.5 48 H173 A3 3 0 0 1 175.5 52.5" fill="none" stroke="#9a9a9a" stroke-width="1"/>
<rect x="167.5" y="81.3" width="15.2" height="12" fill="none" stroke="#9a9a9a" stroke-width="1"/><rect x="169.5" y="83.3" width="11.2" height="3" fill="#d6d6d6" stroke="#9a9a9a" stroke-width="0.9"/><rect x="169.5" y="88.3" width="8" height="3" fill="#d6d6d6" stroke="#9a9a9a" stroke-width="0.9"/>
<path d="M175.5 89 L182.8 95.6 M182.8 89 L175.5 95.6" stroke="#9a9a9a" stroke-width="1.1"/>
<rect x="245.5" y="44.8" width="167" height="22.5" rx="3" fill="none" stroke="#7a7a7a" stroke-width="1"/>
<rect x="415.5" y="44.8" width="45" height="22.5" rx="3" fill="none" stroke="#7a7a7a" stroke-width="1"/>
<path d="M403.5 54.5 L406.4 57.7 L409.3 54.5" fill="none" stroke="#262626" stroke-width="1.2"/>
<path d="M451.8 54.8 L454.3 57.7 L456.8 54.8" fill="none" stroke="#262626" stroke-width="1.2"/>
<path d="M467.9 60.8 L473.4 48 L479 60.8 M469.8 56.2 H477" fill="none" stroke="#454545" stroke-width="1.2"/>
<path d="M478 51.6 L480.5 49.2 L483 51.6" fill="none" stroke="#2a7fc4" stroke-width="1.2"/>
<path d="M495.6 60.8 L500 50.8 L504.5 60.8 M497.1 57.3 H503" fill="none" stroke="#454545" stroke-width="1.2"/>
<path d="M504.1 48.8 L506.6 51.2 L509.1 48.8" fill="none" stroke="#2a7fc4" stroke-width="1.2"/>
<line x1="515.5" y1="44.5" x2="515.5" y2="67.5" stroke="#7a7a7a" stroke-width="1"/>
<path d="M522 60.8 L526.5 48 L531 60" fill="none" stroke="#454545" stroke-width="1.2"/>
<path d="M529 60 L534.6 54.4 L538 57.8 L532.4 63.4 Z" fill="#efbfe2" stroke="#a8207e" stroke-width="1.3"/><path d="M531.2 57.8 L534.6 61.2" stroke="#a8207e" stroke-width="1"/>
<text x="253" y="92" font-family="Liberation Sans" font-weight="bold" font-size="13.5" fill="#383838">B</text>
<text x="279.3" y="92" font-family="Liberation Serif" font-style="italic" font-size="13.6" fill="#484848">I</text>
<path d="M305.2 82 V88.5 A3.4 3.4 0 0 0 312 88.5 V82" fill="none" stroke="#484848" stroke-width="1.2"/><line x1="304.4" y1="93.8" x2="313" y2="93.8" stroke="#3a3a3a" stroke-width="1.2"/>
<text x="331.8" y="93.2" font-family="Liberation Sans" font-size="13.4" fill="#8e8e8e" stroke="#8e8e8e" stroke-width="0.5">S</text><text x="330.5" y="92.2" font-family="Liberation Sans" font-size="13.4" fill="#3a3a3a" stroke="#3a3a3a" stroke-width="0.5">S</text>
<text x="353.3" y="92.7" font-family="Liberation Sans" font-size="12" fill="#555" textLength="15" lengthAdjust="spacingAndGlyphs">ab</text><line x1="353" y1="89.2" x2="369" y2="89.2" stroke="#333" stroke-width="1"/>
<text x="378.6" y="88.4" font-family="Liberation Sans" font-size="11" fill="#4a4a4a" textLength="16.5" lengthAdjust="spacingAndGlyphs">AV</text>
<path d="M379.5 92.3 H385.5 M379.5 92.3 L381.6 90.5 M379.5 92.3 L381.6 94.1 M388.5 92.3 H394.8 M394.8 92.3 L392.7 90.5 M394.8 92.3 L392.7 94.1" fill="none" stroke="#1f74c0" stroke-width="1.3"/>
<path d="M401 87 L403.6 89.7 L406.2 87" fill="none" stroke="#262626" stroke-width="1.2"/>
<path d="M421.4 92.5 L425.7 82.7 L430 92.5 M422.9 89.3 H428.5" fill="none" stroke="#4a4a4a" stroke-width="1.1"/>
<text x="430.6" y="92.6" font-family="Liberation Sans" font-size="13" fill="#4a4a4a">a</text>
<path d="M442.8 87 L445.5 89.7 L448.2 87" fill="none" stroke="#262626" stroke-width="1.2"/>
<line x1="459.8" y1="76" x2="459.8" y2="99" stroke="#7a7a7a" stroke-width="1"/>
<rect x="465.8" y="92" width="16.4" height="4" fill="#ffff00"/>
<path d="M471.5 87.5 L478.6 80.6 A1.6 1.6 0 0 1 480.9 80.8 L481.4 81.4 A1.6 1.6 0 0 1 481.3 83.7 L474.4 90.5 Z" fill="#e6e6e6" stroke="#333" stroke-width="1.1"/><path d="M471.5 87.5 L468 91 L471.5 91 L474.4 90.5" fill="#2a2a2a" stroke="#2a2a2a" stroke-width="1"/>
<path d="M489.9 87 L492.6 89.5 L495.3 87" fill="none" stroke="#262626" stroke-width="1.2"/>
<path d="M510.8 90.5 L515.5 80.1 L520.1 90.5 M512.4 86.9 H518.6" fill="none" stroke="#484848" stroke-width="1.1"/><rect x="506.8" y="92" width="16.2" height="4" fill="#f00"/>
<path d="M530.9 87 L533.5999999999999 89.5 L536.3 87" fill="none" stroke="#262626" stroke-width="1.2"/>
<rect x="562.3" y="48.1" width="2.8" height="2.8" fill="#0f5aa6"/><line x1="567.3" y1="49.5" x2="577" y2="49.5" stroke="#404040" stroke-width="1"/>
<rect x="562.3" y="54.1" width="2.8" height="2.8" fill="#0f5aa6"/><line x1="567.3" y1="55.5" x2="577" y2="55.5" stroke="#404040" stroke-width="1"/>
<rect x="562.3" y="60.1" width="2.8" height="2.8" fill="#0f5aa6"/><line x1="567.3" y1="61.5" x2="577" y2="61.5" stroke="#404040" stroke-width="1"/>
<path d="M585.7 55 L588.45 57.9 L591.2 55" fill="none" stroke="#262626" stroke-width="1.2"/>
<text x="602.8" y="52.1" font-family="Liberation Sans" font-weight="bold" font-size="6.5" fill="#1865b3">1</text><line x1="608.4" y1="49.5" x2="617.8" y2="49.5" stroke="#404040" stroke-width="1"/>
<text x="602.8" y="58.1" font-family="Liberation Sans" font-weight="bold" font-size="6.5" fill="#1865b3">2</text><line x1="608.4" y1="55.5" x2="617.8" y2="55.5" stroke="#404040" stroke-width="1"/>
<text x="602.8" y="64.1" font-family="Liberation Sans" font-weight="bold" font-size="6.5" fill="#1865b3">3</text><line x1="608.4" y1="61.5" x2="617.8" y2="61.5" stroke="#404040" stroke-width="1"/>
<path d="M626.8 55 L629.5 57.9 L632.2 55" fill="none" stroke="#262626" stroke-width="1.2"/>
<path d="M645.1 49.5 H658.9 M653.3000000000001 53.5 H658.9 M653.3000000000001 57.5 H658.9 M645.1 61.5 H658.9" stroke="#8a8a8a" stroke-width="1.1"/>
<path d="M651.1 55.3 H645.1 M647.3000000000001 53.2 L645.1 55.3 L647.3000000000001 57.4" fill="none" stroke="#a0a0a0" stroke-width="1"/>
<path d="M671 49.5 H684.8 M679.2 53.5 H684.8 M679.2 57.5 H684.8 M671 61.5 H684.8" stroke="#8a8a8a" stroke-width="1.1"/>
<path d="M671 55.3 H677 M674.8 53.2 L677 55.3 L674.8 57.4" fill="none" stroke="#a0a0a0" stroke-width="1"/>
<path d="M698.6 49.5 V62.2 M696.2 51.8 L698.6 49.3 L701 51.8 M696.2 59.9 L698.6 62.4 L701 59.9" fill="none" stroke="#1865b3" stroke-width="1.4"/>
<path d="M703.2 49.5 H712 M703.2 53.5 H712 M703.2 57.5 H712 M703.2 61.5 H712" stroke="#404040" stroke-width="1"/>
<path d="M717.8 54.8 L720.65 57.7 L723.5 54.8" fill="none" stroke="#262626" stroke-width="1.2"/>
<path d="M742.4 40 V55.5 M740 53 L742.4 55.5 L744.8 53 M749.3 49.5 V55.5 M746.9 53 L749.3 55.5 L751.7 53" fill="none" stroke="#3c3c3c" stroke-width="1.1"/>
<path d="M745.6 47.5 L749.3 40.4 L753 47.5 M746.9 45.2 H751.7" fill="none" stroke="#1865b3" stroke-width="1.3"/>
<path d="M759.6 47 L762.55 49.9 L765.5 47" fill="none" stroke="#262626" stroke-width="1.2"/>
<rect x="738.6" y="68.6" width="14.8" height="9.8" fill="#e6e6e6"/>
<path d="M742.5 68.6 H738.6 V78.4 H742.5 M749.5 68.6 H753.4 V78.4 H749.5 M742 73.4 H750" fill="none" stroke="#333" stroke-width="1.2"/>
<path d="M745.4 66 V71.5 M743.3 68.2 L745.4 66 L747.5 68.2 M745.4 75.3 V80.7 M743.3 78.5 L745.4 80.7 L747.5 78.5" fill="none" stroke="#1865b3" stroke-width="1.4"/>
<path d="M759.6 73 L762.45 75.8 L765.3 73" fill="none" stroke="#262626" stroke-width="1.2"/>
<path d="M738.5 94.2 H748 L752 98 H744 L742 100.5 L744 103 H738.5 L741.5 98.6 Z" fill="#b0b0b0" stroke="#9a9a9a" stroke-width="0.8"/>
<rect x="744.3" y="99" width="9.4" height="6.6" fill="#e0e0e0" stroke="#8e8e8e" stroke-width="1"/><path d="M746 101 H747 M748.4 101 H752 M746 103.4 H747 M748.4 103.4 H752" stroke="#8e8e8e" stroke-width="0.9"/>
<path d="M759.6 99 L762.45 101.7 L765.3 99" fill="none" stroke="#9a9a9a" stroke-width="1.2"/>
<rect x="558.7" y="76.9" width="22.6" height="22.4" rx="3.5" fill="#d4d4d4" stroke="#8a8a8a" stroke-width="1"/>
<path d="M563.0 81.5 H576.8 M563.0 85.5 H572.4 M563.0 89.5 H576.8 M563.0 93.5 H572.4 " stroke="#404040" stroke-width="1"/>
<path d="M589.0 81.5 H603.0 M591.2 85.5 H600.8 M589.0 89.5 H603.0 M591.2 93.5 H600.8 " stroke="#404040" stroke-width="1"/>
<path d="M614.8 81.5 H629.2 M619.4 85.5 H629.2 M614.8 89.5 H629.2 M619.4 93.5 H629.2 " stroke="#404040" stroke-width="1"/>
<path d="M641.1 81.5 H655.1 M641.1 85.5 H655.1 M641.1 89.5 H655.1 M641.1 93.5 H655.1 " stroke="#404040" stroke-width="1"/>
<line x1="662.8" y1="76.5" x2="662.8" y2="99.5" stroke="#7a7a7a" stroke-width="1"/>
<path d="M671 84.2 H675.6 M671 87.6 H675.6 M671 91 H675.6 M678.5 84.2 H683.2 M678.5 87.6 H683.2 M678.5 91 H683.2" stroke="#1865b3" stroke-width="1.3"/>
<path d="M690.8 86.9 L693.5999999999999 89.7 L696.4 86.9" fill="none" stroke="#262626" stroke-width="1.2"/>
<rect x="791.8" y="44.5" width="136.6" height="60.7" rx="4" fill="none" stroke="#8a8a8a" stroke-width="1"/>
<path d="M914.3 44.5 V105.2" stroke="#8a8a8a" stroke-width="1"/><path d="M914.3 65 H928.4 M914.3 83.8 H928.4" stroke="#6e6e6e" stroke-width="1.6"/>
<path d="M918.8 54.7 L921.45 52.5 L924.1 54.7" fill="none" stroke="#8a8a8a" stroke-width="1.2"/>
<path d="M918.8 73 L921.45 75.7 L924.1 73" fill="none" stroke="#262626" stroke-width="1.2"/>
<path d="M918.8 91.3 H924.1" stroke="#333" stroke-width="1"/><path d="M918.8 93.6 L921.45 96.5 L924.1 93.6" fill="none" stroke="#262626" stroke-width="1.2"/>
<rect x="797" y="49.6" width="12.4" height="10.8" fill="#e4e4e4" stroke="#3a3a3a" stroke-width="1"/>
<rect x="795.8" y="48.4" width="2.4" height="2.4" fill="#fff" stroke="#1865b3" stroke-width="1"/>
<rect x="808.1999999999999" y="48.4" width="2.4" height="2.4" fill="#fff" stroke="#1865b3" stroke-width="1"/>
<rect x="795.8" y="59.199999999999996" width="2.4" height="2.4" fill="#fff" stroke="#1865b3" stroke-width="1"/>
<rect x="808.1999999999999" y="59.199999999999996" width="2.4" height="2.4" fill="#fff" stroke="#1865b3" stroke-width="1"/>
<path d="M800.4 58.6 L803.2 51.6 L806 58.6 M801.4 56.3 H805" fill="none" stroke="#1865b3" stroke-width="1.3"/>
<path d="M815.2 47.1 L830.9 62.8" stroke="#4a4a4a" stroke-width="1.1"/>
<path d="M835.3 47.1 L850.8 62.4 M846.2 62.4 H850.8 V57.8" fill="none" stroke="#4a4a4a" stroke-width="1.1"/>
<rect x="855.8" y="49.8" width="14.8" height="10.7" fill="#e4e4e4" stroke="#4a4a4a" stroke-width="1.1"/>
<ellipse cx="883" cy="55" rx="7.6" ry="5.4" fill="#e4e4e4" stroke="#4a4a4a" stroke-width="1.1"/>
<rect x="895.5" y="49.8" width="15" height="10.7" rx="3" fill="#e4e4e4" stroke="#4a4a4a" stroke-width="1.1"/>
<path d="M795.5 82.2 L802.8 68.3 L810.3 82.2 Z" fill="#e4e4e4" stroke="#4a4a4a" stroke-width="1.1"/>
<path d="M815.2 68.6 H822.4 V81.3 H830.9" fill="none" stroke="#4a4a4a" stroke-width="1.1"/>
<path d="M835.3 69.5 H842.7 V80.6 H850.7 M847.8 78 L850.7 80.6 L847.8 83.2" fill="none" stroke="#4a4a4a" stroke-width="1.1"/>
<path d="M855.6 72.2 H863.8 V68.7 L870.8 75.2 L863.8 81.5 V78.4 H855.6 Z" fill="#e4e4e4" stroke="#4a4a4a" stroke-width="1.1"/>
<path d="M879.6 67.4 H886.5 V76.2 H889.6 L883 82 L876.4 76.2 H879.6 Z" fill="#e4e4e4" stroke="#4a4a4a" stroke-width="1.1"/>
<path d="M898 68.8 H904 Q903 72.5 906 73.6 Q910.5 74 910.5 77 V78.5 Q910.5 81.4 907.5 81.4 H898 Q895.3 81.4 895.3 78.5 V71.5 Q895.3 68.8 898 68.8 Z" fill="#e4e4e4" stroke="#4a4a4a" stroke-width="1.1"/>
<path d="M796.5 87.5 Q797 95 800.5 98 Q806 101 810 100.5 Q812 99.5 810 98 Q806 96.5 803.5 98.5 Q799 97.5 799.5 93 Q801 88.5 805.5 88.5 Q809 89 807 91.5 Q804 93 800.5 92.5" fill="none" stroke="#4a4a4a" stroke-width="1"/>
<path d="M815.2 88 Q829 88.5 831 102.2" fill="none" stroke="#4a4a4a" stroke-width="1.1"/>
<path d="M835.5 93.5 Q838.5 87 842 89 Q844.5 91 846 96 Q848 100.5 851 100.5" fill="none" stroke="#4a4a4a" stroke-width="1.1"/>
<path d="M864.6 87.5 Q862 87.5 862 89.5 V93.5 Q862 95 859.8 95 Q862 95 862 96.5 V100.5 Q862 102.4 864.6 102.4" fill="none" stroke="#4a4a4a" stroke-width="1.1"/>
<path d="M880.8 87.5 Q883.4 87.5 883.4 89.5 V93.5 Q883.4 95 885.6 95 Q883.4 95 883.4 96.5 V100.5 Q883.4 102.4 880.8 102.4" fill="none" stroke="#4a4a4a" stroke-width="1.1"/>
<polygon points="903.10,88.10 904.98,93.11 910.33,93.35 906.14,96.69 907.57,101.85 903.10,98.90 898.63,101.85 900.06,96.69 895.87,93.35 901.22,93.11" fill="#e4e4e4" stroke="#4a4a4a" stroke-width="1.1"/>
<rect x="947.5" y="45.6" width="19" height="18.7" fill="#f4c65c" stroke="#222" stroke-width="1.2"/>
<rect x="943.6" y="41.6" width="11" height="10.8" fill="#e6e6e6" stroke="#333" stroke-width="1.2"/>
<rect x="959.6" y="57.7" width="10.8" height="10.5" fill="#e6e6e6" stroke="#333" stroke-width="1.2"/>
<path d="M954.2 96.2 L956.5 98.6 L958.8 96.2" fill="none" stroke="#262626" stroke-width="1.2"/>
<rect x="992.8" y="41.6" width="26.6" height="26.8" rx="2" fill="#dedede" stroke="#333" stroke-width="1.4"/>
<path d="M1009.6 64.2 L1019.6 52.6 A1.5 1.5 0 0 1 1022 54.4 L1012.2 66.2 Z" fill="#e8e8e8" stroke="#444" stroke-width="1"/>
<path d="M1000.2 68.6 Q1004 68 1005.5 64.6 Q1007.6 61.8 1010.4 63.6 Q1012.6 65.5 1010.8 68 Q1007 70.8 1000.2 68.6 Z" fill="#a7d6f7" stroke="#1f5f94" stroke-width="1"/>
<path d="M1020.4 97 L1022.7 99.4 L1025 97" fill="none" stroke="#262626" stroke-width="1.2"/>
<path d="M1038 45.8 L1043 40.8 L1048.2 46 L1043.5 50.7 Z" fill="#eaeaea" stroke="#333" stroke-width="1.1"/><path d="M1046 42 Q1049.5 41.5 1049.6 46.8" fill="none" stroke="#1f5f94" stroke-width="1.3"/>
<rect x="1035.2" y="52.2" width="15.8" height="3.4" fill="#ed7d31"/>
<path d="M1108.9 48.3 L1111.4 51 L1113.9 48.3" fill="none" stroke="#262626" stroke-width="1.2"/>
<path d="M1044 67.6 H1036.6 V75.8 H1040" fill="none" stroke="#333" stroke-width="1.1"/>
<path d="M1040.4 76 L1041 72.6 L1048 65.8 A1.6 1.6 0 0 1 1050.3 66 L1050.6 66.6 A1.6 1.6 0 0 1 1050.4 68.6 L1043.6 75.4 Z" fill="#8ccaf2" stroke="#1f6fbf" stroke-width="1.1"/>
<rect x="1035.2" y="78.1" width="15.8" height="3.5" fill="#1b6594"/>
<path d="M1132.8 74.2 L1135.65 76.9 L1138.5 74.2" fill="none" stroke="#262626" stroke-width="1.2"/>
<path d="M1036 101 L1041 95 H1050.6 L1045.6 101 Z" fill="#e8e8e8" stroke="#333" stroke-width="1"/><path d="M1036 101 H1045.6 V105.4 H1036 Z" fill="#222" stroke="#222" stroke-width="1"/><path d="M1045.6 101 L1050.6 95 V99.8 L1045.6 105.4 Z" fill="#9a9a9a" stroke="#333" stroke-width="1"/>
<path d="M1128.9 99.8 L1131.65 102.5 L1134.4 99.8" fill="none" stroke="#262626" stroke-width="1.2"/>
<circle cx="1176" cy="45.7" r="4.6" fill="#dcdcdc" stroke="#3a3a3a" stroke-width="1.1"/><path d="M1172.6 49 L1166.3 55" stroke="#3a3a3a" stroke-width="1.2"/>
<text x="1170.3" y="73.8" font-family="Liberation Sans" font-size="11.2" fill="#a0287a" stroke="#a0287a" stroke-width="0.3">b</text>
<text x="1174" y="81.8" font-family="Liberation Sans" font-size="10.5" fill="#1865b3" stroke="#1865b3" stroke-width="0.3">c</text>
<path d="M1167.8 73.8 Q1163.8 76.8 1165.8 79.6 Q1167.4 81.2 1172.8 80.8 M1170.4 78.4 L1172.8 80.8 L1170.4 83.2" fill="none" stroke="#1865b3" stroke-width="1.3"/>
<path d="M1238.3 74.2 L1241.35 76.9 L1244.4 74.2" fill="none" stroke="#262626" stroke-width="1.2"/>
<path d="M1167.5 93 V105.2 L1170.3 102.3 L1172.6 107 L1174.5 106.1 L1172.3 101.6 H1176.8 Z" fill="#f4f4f4" stroke="#3a3a3a" stroke-width="1.1"/>
<path d="M1220 99.8 L1222.5 102.5 L1225 99.8" fill="none" stroke="#262626" stroke-width="1.2"/>
<path d="M1306 115.5 L1310.75 120.7 L1315.5 115.5" fill="none" stroke="#333" stroke-width="1.3"/>
<circle cx="1131" cy="17" r="5.6" fill="none" stroke="#222" stroke-width="1.2"/><circle cx="1131" cy="17" r="3.4" fill="#222"/>
<path d="M1209.8 12.8 H1220 V19.8 H1213.8 L1211.4 22 V19.8 H1209.8 Z" fill="none" stroke="#5a5a5a" stroke-width="1"/>
<path d="M1249 15 V22.6 H1259.6 V18.6 M1252.4 19.4 Q1252.6 14.4 1258 14.2 M1256 11.8 L1259 14.2 L1256 16.8" fill="none" stroke="#222" stroke-width="1.2"/>
<path d="M1310 15.6 L1312.5 18.4 L1315 15.6" fill="none" stroke="#222" stroke-width="1.2"/>
</svg>
<div class="t" style="left:20.43px;top:11.09px;font-size:13.33px;color:#f2f2f2;font-weight:normal;transform:scaleX(0.9110)">File</div>
<div class="t" style="left:65.60px;top:11.09px;font-size:13.33px;color:#f2f2f2;font-weight:normal;transform:scaleX(0.9928)">Slide Master</div>
<div class="t" style="left:214.60px;top:11.09px;font-size:13.33px;color:#f2f2f2;font-weight:normal;transform:scaleX(0.9966)">Insert</div>
<div class="t" style="left:268.05px;top:11.09px;font-size:13.33px;color:#f2f2f2;font-weight:normal;transform:scaleX(0.9839)">Draw</div>
<div class="t" style="left:320.24px;top:11.09px;font-size:13.33px;color:#f2f2f2;font-weight:normal;transform:scaleX(0.9581)">Transitions</div>
<div class="t" style="left:404.80px;top:11.09px;font-size:13.33px;color:#f2f2f2;font-weight:normal;transform:scaleX(0.9711)">Animations</div>
<div class="t" style="left:491.22px;top:11.09px;font-size:13.33px;color:#f2f2f2;font-weight:normal;transform:scaleX(0.9159)">Review</div>
<div class="t" style="left:552.00px;top:11.09px;font-size:13.33px;color:#f2f2f2;font-weight:normal;transform:scaleX(0.9409)">View</div>
<div class="t" style="left:598.34px;top:11.09px;font-size:13.33px;color:#f2f2f2;font-weight:normal;transform:scaleX(0.9959)">Help</div>
<div class="t" style="left:647.00px;top:11.09px;font-size:13.33px;color:#f2f2f2;font-weight:normal;transform:scaleX(0.9910)">Acrobat</div>
<div class="t" style="left:158.51px;top:11.17px;font-size:13.24px;color:#f2f2f2;font-weight:bold;transform:scaleX(1.0365)">Home</div>
<div class="t" style="left:714.22px;top:11.09px;font-size:13.33px;color:#eecbc1;font-weight:normal;transform:scaleX(0.9672)">Shape Format</div>
<div class="t" style="left:1140.44px;top:10.99px;font-size:13.33px;color:#1e1e1e;font-weight:normal;transform:scaleX(0.9927)">Record</div>
<div class="t" style="left:1265.05px;top:10.99px;font-size:13.33px;color:#1e1e1e;font-weight:normal;transform:scaleX(0.9149)">Share</div>
<div class="t" style="left:26.70px;top:116.87px;font-size:11.59px;color:#202020;font-weight:normal;transform:scaleX(1.0406)">Clipboard</div>
<div class="t" style="left:159.01px;top:116.87px;font-size:11.59px;color:#202020;font-weight:normal;transform:scaleX(0.9429)">Slides</div>
<div class="t" style="left:372.64px;top:116.87px;font-size:11.59px;color:#202020;font-weight:normal;transform:scaleX(1.0342)">Font</div>
<div class="t" style="left:630.58px;top:116.87px;font-size:11.59px;color:#202020;font-weight:normal;transform:scaleX(0.9903)">Paragraph</div>
<div class="t" style="left:936.53px;top:116.87px;font-size:11.59px;color:#202020;font-weight:normal;transform:scaleX(1.0442)">Drawing</div>
<div class="t" style="left:1186.52px;top:116.87px;font-size:11.59px;color:#202020;font-weight:normal;transform:scaleX(1.0558)">Editing</div>
<div class="t" style="left:25.39px;top:76.75px;font-size:12.32px;color:#202020;font-weight:normal;transform:scaleX(0.9231)">Paste</div>
<div class="t" style="left:127.74px;top:76.05px;font-size:12.32px;color:#202020;font-weight:normal;transform:scaleX(0.9707)">New</div>
<div class="t" style="left:121.78px;top:91.85px;font-size:12.32px;color:#202020;font-weight:normal;transform:scaleX(0.9343)">Slide</div>
<div class="t" style="left:186.84px;top:51.05px;font-size:12.32px;color:#8e8e8e;font-weight:normal;transform:scaleX(0.8761)">Reset</div>
<div class="t" style="left:186.77px;top:82.75px;font-size:12.32px;color:#8e8e8e;font-weight:normal;transform:scaleX(0.9468)">Delete</div>
<div class="t" style="left:248.30px;top:49.73px;font-size:12.46px;color:#202020;font-weight:normal;transform:scaleX(0.9576)">Aptos (Body)</div>
<div class="t" style="left:417.55px;top:49.73px;font-size:12.46px;color:#202020;font-weight:normal;transform:scaleX(0.9068)">130</div>
<div class="t" style="left:936.10px;top:75.85px;font-size:12.32px;color:#202020;font-weight:normal;transform:scaleX(0.9626)">Arrange</div>
<div class="t" style="left:989.45px;top:75.85px;font-size:12.32px;color:#202020;font-weight:normal;transform:scaleX(0.9904)">Quick</div>
<div class="t" style="left:984.80px;top:91.95px;font-size:12.32px;color:#202020;font-weight:normal;transform:scaleX(0.9029)">Styles</div>
<div class="t" style="left:1054.79px;top:42.75px;font-size:12.32px;color:#202020;font-weight:normal;transform:scaleX(0.9259)">Shape Fill</div>
<div class="t" style="left:1054.77px;top:68.55px;font-size:12.32px;color:#202020;font-weight:normal;transform:scaleX(0.9557)">Shape Outline</div>
<div class="t" style="left:1054.79px;top:94.25px;font-size:12.32px;color:#202020;font-weight:normal;transform:scaleX(0.9207)">Shape Effects</div>
<div class="t" style="left:1184.64px;top:42.75px;font-size:12.32px;color:#202020;font-weight:normal;transform:scaleX(0.9764)">Find</div>
<div class="t" style="left:1184.68px;top:68.55px;font-size:12.32px;color:#202020;font-weight:normal;transform:scaleX(0.9290)">Replace</div>
<div class="t" style="left:1185.11px;top:94.25px;font-size:12.32px;color:#202020;font-weight:normal;transform:scaleX(0.8886)">Select</div>
<div class="t" style="left:301.82px;top:205.29px;font-size:47.54px;color:#000;font-weight:normal;transform:scaleX(0.9589)">Click to edit Master title style</div>
<div class="t" style="left:321.47px;top:308.93px;font-size:29.57px;color:#000;font-weight:normal;transform:scaleX(1.0373)">Click to edit Master text styles</div>
<div class="t" style="left:362.01px;top:347.68px;font-size:26.09px;color:#000;font-weight:normal;transform:scaleX(1.0111)">Second level</div>
<div class="t" style="left:403.57px;top:381.34px;font-size:23.19px;color:#000;font-weight:normal;transform:scaleX(0.9309)">Third level</div>
<div class="t" style="left:443.42px;top:412.69px;font-size:19.71px;color:#000;font-weight:normal;transform:scaleX(1.0022)">Fourth level</div>
<div class="t" style="left:483.40px;top:440.02px;font-size:18.84px;color:#000;font-weight:normal;transform:scaleX(1.0597)">Fifth level</div>
<div class="t" style="left:301.94px;top:713.80px;font-size:13.91px;color:#767676;font-weight:normal;transform:scaleX(0.9464)">27.04.2024</div>
<div class="t" style="left:740.53px;top:714.13px;font-size:12.46px;color:#767676;font-weight:normal;transform:scaleX(1.0699)">Footer</div>
</body></html>
